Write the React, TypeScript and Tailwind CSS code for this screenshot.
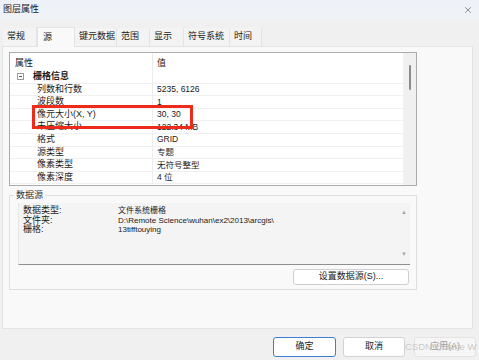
import { X } from "lucide-react";

const tabs = [
  { label: "常规", w: "w-[34px]" },
  { label: "源", w: "w-[38px]", active: true },
  { label: "键元数据", w: "w-[42px]" },
  { label: "范围", w: "w-[33px]" },
  { label: "显示", w: "w-[34px]" },
  { label: "符号系统", w: "w-[46px]" },
  { label: "时间", w: "w-[32px]" },
];

const rows = [
  { name: "列数和行数", value: "5235, 6126" },
  { name: "波段数", value: "1" },
  { name: "像元大小(X, Y)", value: "30, 30" },
  { name: "未压缩大小", value: "122.34 MB" },
  { name: "格式", value: "GRID" },
  { name: "源类型", value: "专题" },
  { name: "像素类型", value: "无符号整型" },
  { name: "像素深度", value: "4 位" },
];

const source = [
  { k: "数据类型:", v: "文件系统栅格" },
  { k: "文件夹:", v: "D:\\Remote Science\\wuhan\\ex2\\2013\\arcgis\\" },
  { k: "栅格:", v: "13tifftouying" },
];

export default function App() {
  return (
    <div className="relative w-[479px] h-[360px] overflow-hidden bg-[#f0f0f0] text-[9px] text-[#1a1a1a] font-['Liberation_Sans','Noto_Sans_CJK_SC',sans-serif]">
      {/* title bar */}
      <div className="h-[20px] flex items-center justify-between pl-[3px] pr-[6px] bg-gradient-to-b from-[#edf1f8] to-[#f0f2f6]">
        <span className="text-[9px]">图层属性</span>
        <X size={10} strokeWidth={1.2} className="text-[#333]" />
      </div>

      {/* tabs */}
      <div className="flex mt-[8px] ml-[3px] h-[18px] items-end">
        {tabs.map((t) =>
          t.active ? (
            <div
              key={t.label}
              className={`${t.w} relative z-10 h-[20px] -mb-[1px] pl-[5px] pt-[3px] bg-[#f9f9f9] border-x border-t border-[#e3e3e3]`}
            >
              {t.label}
            </div>
          ) : (
            <div
              key={t.label}
              className={`${t.w} h-[18px] pl-[4px] flex items-center bg-[#f3f3f3] border-r border-[#e4e4e4]`}
            >
              {t.label}
            </div>
          )
        )}
      </div>

      {/* panel */}
      <div className="ml-[2px] w-[471px] h-[283px] bg-[#f9f9f9] border border-[#e3e3e3] pl-[6px] pt-[5px]">
        {/* property table */}
        <div className="relative w-[408px] h-[134px] bg-white border border-[#ababab] flex">
          <div className="flex-1 flex flex-col">
            <div className="h-[18px] flex shrink-0">
              <div className="w-[143px] pl-[5px] pt-[4px] border-r border-[#ececec]">属性</div>
              <div className="flex-1 pl-[4px] pt-[4px]">值</div>
            </div>
            <div className="h-[12.6px] flex shrink-0 border-b border-[#f0f0f0]">
              <div className="w-[143px] flex items-center border-r border-[#ececec]">
                <span className="ml-[7px] w-[7px] h-[7px] border border-[#9a9a9a] flex items-center justify-center">
                  <span className="w-[3px] h-px bg-[#555]" />
                </span>
                <span className="ml-[9px] font-bold">栅格信息</span>
              </div>
              <div className="flex-1" />
            </div>
            {rows.map((r) => (
              <div key={r.name} className="h-[12.6px] flex shrink-0 items-center border-b border-[#f0f0f0]">
                <div className="w-[143px] h-full flex items-center pl-[27px] border-r border-[#ececec]">{r.name}</div>
                <div className="flex-1 pl-[4px] text-[8.5px]">{r.value}</div>
              </div>
            ))}
          </div>
          <div className="w-[13px] bg-[#f0f0f0] flex justify-center pt-[12px]">
            <div className="w-[2px] h-[25px] bg-[#8c8c8c] rounded-full" />
          </div>
          {/* highlight */}
          <div className="absolute left-[22px] top-[52px] w-[161px] h-[24px] border-[3px] border-[#ee2b1b]" />
        </div>

        {/* data source group */}
        <div className="relative mt-[9px] w-[408px] h-[95px] border border-[#dedede] pt-[7px] pl-[8px]">
          <span className="absolute left-[4px] -top-[7px] px-[2px] bg-[#f9f9f9] text-[#333]">数据源</span>
          <div className="w-[392px] h-[62px] flex bg-[#f4f4f4] border-l border-[#e6e6e6] border-b border-b-[#8f8f8f]">
            <div className="flex-1 pl-[4px] pt-[3px] leading-[9.6px]">
              {source.map((s) => (
                <div key={s.k} className="flex">
                  <span className="w-[95px]">{s.k}</span>
                  <span className="text-[8px]">{s.v}</span>
                </div>
              ))}
            </div>
            <div className="w-[12px] flex flex-col items-center justify-between py-[5px] text-[#a8a8a8] text-[6px]">
              <span>▲</span>
              <span>▼</span>
            </div>
          </div>
          <div className="flex justify-end pr-[7px] mt-[4px]">
            <button className="w-[116px] h-[16px] bg-white border border-[#cfcfcf] rounded-[3px] text-[9px]">
              设置数据源(S)...
            </button>
          </div>
        </div>
      </div>

      {/* bottom buttons */}
      <div className="flex mt-[8px] ml-[273px] gap-[7px]">
        <button className="w-[63px] h-[20px] bg-white border-[1.5px] border-[#3a7fd5] rounded-[3px]">确定</button>
        <button className="w-[62px] h-[20px] bg-white border border-[#d2d2d2] rounded-[3px]">取消</button>
        <button className="w-[62px] h-[20px] ml-[2px] bg-[#f6f6f6] border border-[#e3e3e3] rounded-[3px] text-[#9a9a9a]">
          应用(A)
        </button>
      </div>
      <span className="absolute left-[405px] top-[341px] text-[9.5px] leading-[12px] text-[#bdbdbd]/80 pointer-events-none whitespace-nowrap">
        CSDN @Jane W
      </span>
    </div>
  );
}
